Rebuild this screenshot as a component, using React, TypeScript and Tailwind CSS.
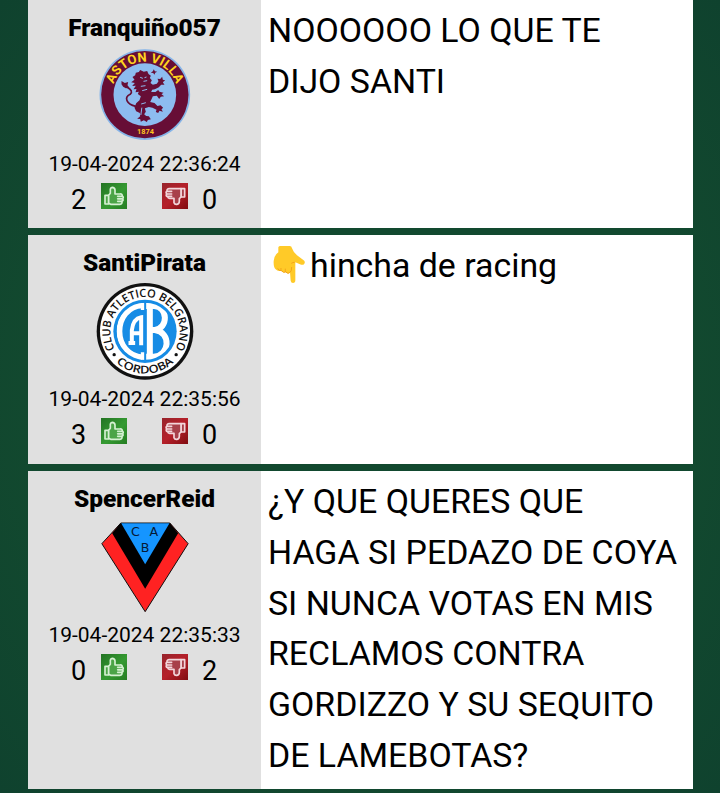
import React from "react";

function VillaCrest() {
  return (
    <svg className="block size-[98px]" viewBox="16.5 12 294 294">
      <defs>
        <path id="villa-arc" d="M70.700 188 A99 99 0 1 1 255.300 188" />
      </defs>
      <circle cx="163" cy="152" r="136" fill="#85b4e8" />
      <circle cx="163" cy="152" r="131" fill="#670e36" />
      <circle cx="163" cy="152" r="94" fill="#8dbcf0" />
      <text fill="#ffd51e" fontFamily="Roboto, sans-serif" fontWeight="700" fontSize="39">
        <textPath href="#villa-arc" startOffset="50%" textAnchor="middle" textLength="246">ASTON VILLA</textPath>
      </text>
      <text x="165" y="271" fill="#ffc51e" fontFamily="Roboto, sans-serif" fontWeight="700" fontSize="22" textAnchor="middle">1874</text>
      <g fill="#670e36">
        <path d="M126 99 L134 94 L136 86 L145 84 L149 78 L160 83 L170 81 L174 90 L181 95 L178 102 L184 109 L180 117 L187 122 L199 119 L204 112 L201 104 L209 105 L215 98 L217 107 L224 109 L217 115 L222 122 L212 122 L205 130 L193 136 L185 137 L182 144 L195 144 L203 138 L207 143 L219 146 L213 151 L221 157 L211 158 L206 165 L199 155 L187 157 L182 168 L179 174 L192 177 L201 186 L210 184 L218 191 L213 196 L217 203 L207 200 L203 207 L196 204 L198 197 L186 191 L175 189 L163 193 L166 203 L161 211 L167 216 L175 217 L181 226 L172 228 L169 234 L160 229 L151 233 L149 225 L140 224 L149 217 L148 207 L137 202 L132 191 L137 178 L147 169 L151 157 L142 150 L145 143 L135 145 L138 135 L129 136 L136 125 L125 126 L133 117 L122 115 L132 107 Z" />
        <path d="M93 111 L103 117 L113 114 L111 124 L117 131 L106 133 L98 128 L93 121 Z" />
        <path d="M190 76 L193 82 L200 83 L194 86 L192 92 L188 87 L181 86 L187 82 Z" />
      </g>
      <path d="M110 130 Q130 141 119 151 C100 160 107 180 136 187" fill="none" stroke="#670e36" strokeWidth="5" />
      <path d="M149 100 L157 103 M162 101 L168 99 M159 112 L170 110 M151 127 L165 125 M155 140 L170 136 M152 180 L166 176 M154 191 L151 213" fill="none" stroke="#8dbcf0" strokeWidth="3" />
    </svg>
  );
}

function BelgranoCrest() {
  return (
    <svg className="block size-[98px]" viewBox="16.5 15 294 294">
      <defs>
        <path id="belgrano-top" d="M80.100 223.100 A104 104 0 1 1 246.900 223.100" />
        <path id="belgrano-bottom" d="M36.500 160 A127 127 0 0 0 290.500 160" />
        <clipPath id="belgrano-disc"><circle cx="163.500" cy="160" r="86" /></clipPath>
      </defs>
      <circle cx="163.500" cy="160" r="145" fill="#111" />
      <circle cx="163.500" cy="160" r="135" fill="#fff" />
      <circle cx="163.500" cy="160" r="95" fill="#168ce5" />
      <text fill="#111" fontFamily="'Open Sans', sans-serif" fontWeight="600" fontSize="34">
        <textPath href="#belgrano-top" startOffset="50%" textAnchor="middle" textLength="434" lengthAdjust="spacingAndGlyphs">CLUB ATLETICO BELGRANO</textPath>
      </text>
      <text fill="#111" fontFamily="'Open Sans', sans-serif" fontWeight="600" fontSize="33">
        <textPath href="#belgrano-bottom" startOffset="50%" textAnchor="middle" textLength="190" lengthAdjust="spacingAndGlyphs">CORDOBA</textPath>
      </text>
      <circle cx="71" cy="230" r="5" fill="#111" />
      <circle cx="257" cy="230" r="5" fill="#111" />
      <g clipPath="url(#belgrano-disc)" fill="none" stroke="#fff">
        <path d="M156 82 C112 84 87 120 87 160 C87 201 114 236 156 238" strokeWidth="17" />
        <path d="M156 74 V96 M156 223 V248" strokeWidth="10" />
        <path d="M124 195 V157 Q128 122 152 118 V202 M124 166 H152 M114 195 H134" strokeWidth="12" />
        <path d="M178 84 V236 M167 84 H191 C233 86 234 151 193 156 H180 M193 156 C243 163 238 233 190 236 H167" strokeWidth="18" />
      </g>
    </svg>
  );
}

function BrownCrest() {
  return (
    <svg className="block size-[98px]" viewBox="16.5 15 294 294">
      <path d="M91 27 H238 L293 89 L164 293 L34 89 Z" fill="#ff2222" stroke="#111" strokeWidth="3" />
      <path d="M91 27 H238 L263 58 L164 224 L65 58 Z" fill="#000" />
      <path d="M92 28 H237 L164 151 Z" fill="#1595ff" />
      <g fill="#061a35" fontFamily="'DejaVu Sans', sans-serif" fontSize="38" textAnchor="middle">
        <text x="135" y="65">C</text>
        <text x="190" y="65">A</text>
        <text x="164" y="114">B</text>
      </g>
    </svg>
  );
}

function Thumb({ down = false }: { down?: boolean }) {
  return (
    <svg className="block size-[26px]" viewBox="0 0 78 78">
      <defs>
        <linearGradient id="thumb-up" x1="0" y1="0" x2="1" y2="1">
          <stop offset="0" stopColor="#237323" />
          <stop offset=".55" stopColor="#359a32" />
          <stop offset="1" stopColor="#257d22" />
        </linearGradient>
        <linearGradient id="thumb-down" x1="0" y1="0" x2="1" y2="1">
          <stop offset="0" stopColor="#98242c" />
          <stop offset=".5" stopColor="#b5202a" />
          <stop offset="1" stopColor="#800c10" />
        </linearGradient>
      </defs>
      <rect width="78" height="78" fill={down ? "url(#thumb-down)" : "url(#thumb-up)"} />
      {down ? (
        <g fill="#a8404a" stroke="#f3d5da" strokeWidth="5" strokeLinejoin="round" strokeLinecap="round">
          <path d="M57 17 H68 V42 H57 Z" />
          <path d="M57 17 H22 Q14 17 15 24 Q10 28 14 33 Q10 39 17 41 Q18 47 25 46 H36 V59 Q38 65 45 64 Q52 63 52 55 V47 L57 42 Z" />
          <path d="M16 25 H29 M15 33 H29 M18 40 H29" fill="none" />
        </g>
      ) : (
        <g fill="#4ba447" stroke="#d5f0d2" strokeWidth="5" strokeLinejoin="round" strokeLinecap="round">
          <path d="M23 37 H12 V63 H23 Z" />
          <path d="M23 37 L28 31 V19 Q29 13 35 13 Q42 14 42 22 V33 H57 Q64 32 64 39 Q69 43 65 47 Q68 52 63 55 Q64 64 57 64 H29 L23 61 Z" />
          <path d="M50 40 H63 M50 47.500 H64 M50 55 H62" fill="none" />
        </g>
      )}
    </svg>
  );
}

function PointingDown() {
  return (
    <svg role="img" aria-label="👇" className="mr-1 ml-1 inline-block h-[40px] w-[34px] align-[-8px]" viewBox="0 0 102 120">
      <path d="M19 7 Q20 3 26 3 H53 Q59 3 60 10 Q65 24 75 31 L94 45 Q101 50 97 56 Q93 62 84 58 L70 52 V106 Q70 114 63 114 Q57 114 56 107 L54 82 Q49 89 41 81 Q34 85 28 77 Q18 81 11 73 Q4 66 5 48 Q6 31 19 22 Z" fill="#ffca28" />
      <path d="M17 70 Q20 78 28 77 Q26 73 27 69 M28 77 Q35 85 41 81 Q39 76 40 71 M41 81 Q49 89 54 82 Q59 79 59 66 M68 52 Q62 52 58 55" fill="none" stroke="#f3a51b" strokeWidth="3" />
    </svg>
  );
}

interface PostProps {
  name: string;
  date: string;
  up: number;
  down: number;
  crest: React.ReactNode;
  height: string;
  children: React.ReactNode;
}

function Post({ name, date, up, down, crest, height, children }: PostProps) {
  return (
    <article className={`flex w-[665px] bg-white ${height}`}>
      <aside className="flex w-[233px] shrink-0 flex-col items-center bg-[#e0e0e0] pt-3">
        <h2 className="h-9 text-[24.400px] leading-8 font-black whitespace-nowrap">{name}</h2>
        {crest}
        <time className="mt-[3px] h-[31px] text-[21px] leading-[31px] whitespace-nowrap">{date}</time>
        <div className="mt-[3px] flex h-[26px] items-center pr-px text-[27px] leading-[26px]">
          <span className="w-[30px] pt-2">{up}</span>
          <Thumb />
          <span className="w-[35px]" />
          <Thumb down />
          <span className="w-[29px] pt-2 pl-3.5">{down}</span>
        </div>
      </aside>
      <div className="pt-1.5 pl-[7px] text-[33.870px] leading-[50.800px] whitespace-nowrap">{children}</div>
    </article>
  );
}

export default function App() {
  return (
    <main className="flex h-[793px] flex-col gap-[7px] overflow-hidden bg-[#10462f] bg-[radial-gradient(ellipse_at_center,#12492f_0%,#12492f_65%,#0f422e_100%)] pl-7 font-[Roboto,sans-serif] text-black">
      <Post name="Franquiño057" date="19-04-2024 22:36:24" up={2} down={0} crest={<VillaCrest />} height="h-[228px]">
        <p>NOOOOOO LO QUE TE<br />DIJO SANTI</p>
      </Post>
      <Post name="SantiPirata" date="19-04-2024 22:35:56" up={3} down={0} crest={<BelgranoCrest />} height="h-[229px]">
        <p><PointingDown />hincha de racing</p>
      </Post>
      <Post name="SpencerReid" date="19-04-2024 22:35:33" up={0} down={2} crest={<BrownCrest />} height="h-[318px]">
        <p>¿Y QUE QUERES QUE<br />HAGA SI PEDAZO DE COYA<br />SI NUNCA VOTAS EN MIS<br />RECLAMOS CONTRA<br />GORDIZZO Y SU SEQUITO<br />DE LAMEBOTAS?</p>
      </Post>
    </main>
  );
}
